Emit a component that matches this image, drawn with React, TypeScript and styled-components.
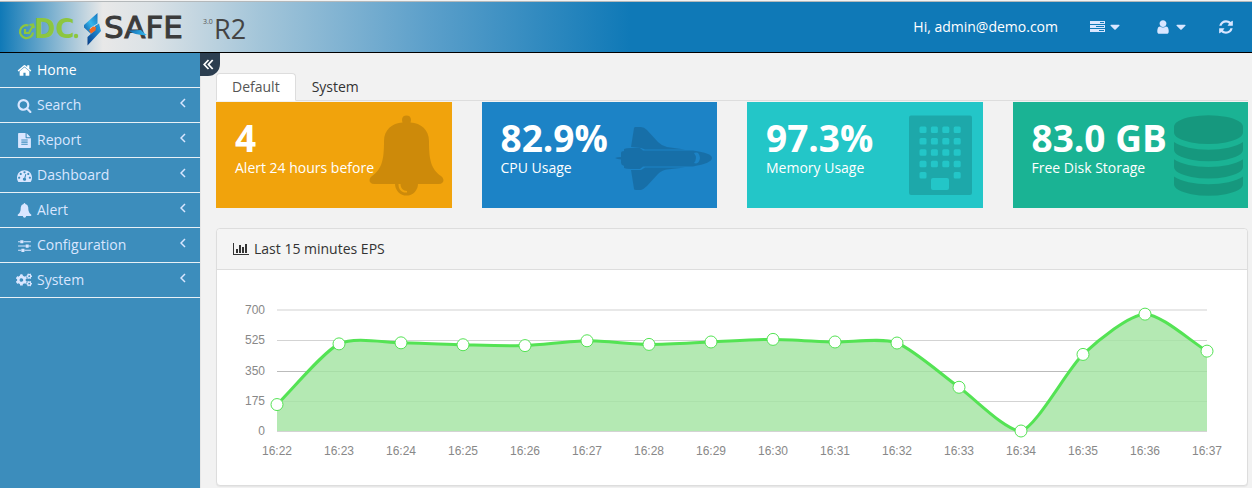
import React, { useLayoutEffect, useRef, useState } from "react";
import styled, { createGlobalStyle, css } from "styled-components";
import { FaCogs } from "react-icons/fa";

const GlobalStyle = createGlobalStyle`
  *, *::before, *::after { box-sizing: border-box; }
  body {
    margin: 0;
    background: #f2f2f2;
    color: #333;
    font: 14px/20px "Open Sans", "Noto Sans", sans-serif;
  }
  button { font: inherit; border: 0; background: none; padding: 0; cursor: pointer; }
  a { color: inherit; text-decoration: none; }
`;

const paths = {
  home: "M1472 992v480q0 26-19 45t-45 19h-384v-384h-256v384h-384q-26 0-45-19t-19-45v-480q0-1 .5-3t.5-3l575-474 575 474q1 2 1 6zm223-69l-62 74q-8 9-21 11h-3q-13 0-21-7l-692-577-692 577q-12 8-24 7-13-2-21-11l-62-74q-8-10-7-23.5t11-21.5l719-599q32-26 76-26t76 26l244 204v-195q0-14 9-23t23-9h192q14 0 23 9t9 23v408l219 182q10 8 11 21.5t-7 23.5z",
  search: "M1216 832q0-185-131.5-316.5t-316.5-131.5-316.5 131.5-131.5 316.5 131.5 316.5 316.5 131.5 316.5-131.5 131.5-316.5zm512 832q0 52-38 90t-90 38q-54 0-90-38l-343-342q-179 124-399 124-143 0-273.5-55.5t-225-150-150-225-55.5-273.5 55.5-273.5 150-225 225-150 273.5-55.5 273.5 55.5 225 150 150 225 55.5 273.5q0 220-124 399l343 343q37 37 37 90z",
  report: "M1596 476q14 14 28 36h-472v-472q22 14 36 28zm-476 164h544v1056q0 40-28 68t-68 28h-1344q-40 0-68-28t-28-68v-1600q0-40 28-68t68-28h800v544q0 40 28 68t68 28zm160 736v-64q0-14-9-23t-23-9h-704q-14 0-23 9t-9 23v64q0 14 9 23t23 9h704q14 0 23-9t9-23zm0-256v-64q0-14-9-23t-23-9h-704q-14 0-23 9t-9 23v64q0 14 9 23t23 9h704q14 0 23-9t9-23zm0-256v-64q0-14-9-23t-23-9h-704q-14 0-23 9t-9 23v64q0 14 9 23t23 9h704q14 0 23-9t9-23z",
  dashboard: "M384 1152q0-53-37.5-90.5t-90.5-37.5-90.5 37.5-37.5 90.5 37.5 90.5 90.5 37.5 90.5-37.5 37.5-90.5zm192-448q0-53-37.5-90.5t-90.5-37.5-90.5 37.5-37.5 90.5 37.5 90.5 90.5 37.5 90.5-37.5 37.5-90.5zm428 481l101-382q6-26-7.5-48.5t-38.5-29.5-48 6.5-30 39.5l-101 382q-60 5-107 43.5t-63 98.5q-20 77 20 146t117 89 146-20 89-117q16-60-6-117t-72-91zm660-33q0-53-37.5-90.5t-90.5-37.5-90.5 37.5-37.5 90.5 37.5 90.5 90.5 37.5 90.5-37.5 37.5-90.5zm-640-640q0-53-37.5-90.5t-90.5-37.5-90.5 37.5-37.5 90.5 37.5 90.5 90.5 37.5 90.5-37.5 37.5-90.5zm448 192q0-53-37.5-90.5t-90.5-37.5-90.5 37.5-37.5 90.5 37.5 90.5 90.5 37.5 90.5-37.5 37.5-90.5zm320 448q0 261-141 483-19 29-54 29h-1402q-35 0-54-29-141-221-141-483 0-182 71-348t191-286 286-191 348-71 348 71 286 191 191 286 71 348z",
  bell: "M896 0q-90 0-104 120-300 60-340 380-10 250-40 420-50 290-332 490v60q0 80 80 80h536q20 200 200 200t200-200h536q80 0 80-80v-60q-282-200-332-490-30-170-40-420-40-320-340-380-14-120-104-120z",
  sliders: "M480 1408v128h-352v-128h352zm352-128q26 0 45 19t19 45v256q0 26-19 45t-45 19h-256q-26 0-45-19t-19-45v-256q0-26 19-45t45-19h256zm160-384v128h-864v-128h864zm-640-512v128h-224v-128h224zm1312 1024v128h-736v-128h736zm-960-1152q26 0 45 19t19 45v256q0 26-19 45t-45 19h-256q-26 0-45-19t-19-45v-256q0-26 19-45t45-19h256zm640 512q26 0 45 19t19 45v256q0 26-19 45t-45 19h-256q-26 0-45-19t-19-45v-256q0-26 19-45t45-19h256zm320 128v128h-224v-128h224zm0-512v128h-864v-128h864z",
  caret: "M1408 704q0 26-19 45l-448 448q-19 19-45 19t-45-19l-448-448q-19-19-19-45t19-45 45-19h896q26 0 45 19t19 45z",
  refresh: "M1639 1056q0 5-1 7-64 268-268 434.5t-478 166.5q-146 0-282.5-55t-243.5-157l-129 129q-19 19-45 19t-45-19-19-45v-448q0-26 19-45t45-19h448q26 0 45 19t19 45-19 45l-137 137q71 66 161 102t187 36q134 0 250-65t186-179q11-17 53-117 8-23 30-23h192q13 0 22.5 9.5t9.5 22.5zm25-800v448q0 26-19 45t-45 19h-448q-26 0-45-19t-19-45 19-45l138-138q-148-137-349-137-134 0-250 65t-186 179q-11 17-53 117-8 23-30 23h-199q-13 0-22.5-9.5t-9.5-22.5v-7q65-268 270-434.5t480-166.5q146 0 284 55.5t245 156.5l130-129q19-19 45-19t45 19 19 45z",
  user: "M1536 1399q0 109-62.5 187t-150.5 78h-854q-88 0-150.5-78t-62.5-187q0-85 8.5-160.5t31.5-152 58.5-131 94-89 134.5-34.5q131 128 313 128t313-128q76 0 134.5 34.5t94 89 58.5 131 31.5 152 8.5 160.5zm-256-887q0 159-112.5 271.5t-271.5 112.5-271.5-112.5-112.5-271.5 112.5-271.5 271.5-112.5 271.5 112.5 112.5 271.5z",
  database: "M896 768q237 0 443-43t325-127v170q0 69-103 128t-280 93.5-385 34.5-385-34.5-280-93.5-103-128v-170q119 84 325 127t443 43zm0 768q237 0 443-43t325-127v170q0 69-103 128t-280 93.5-385 34.5-385-34.5-280-93.5-103-128v-170q119 84 325 127t443 43zm0-384q237 0 443-43t325-127v170q0 69-103 128t-280 93.5-385 34.5-385-34.5-280-93.5-103-128v-170q119 84 325 127t443 43zm0-1152q208 0 385 34.5t280 93.5 103 128v128q0 69-103 128t-280 93.5-385 34.5-385-34.5-280-93.5-103-128v-128q0-69 103-128t280-93.5 385-34.5z",
};

const Glyph = ({ name, size = 14 }: { name: keyof typeof paths; size?: number }) => (
  <svg width={size} height={size} viewBox="0 0 1792 1792" fill="currentColor" aria-hidden="true">
    <path d={paths[name]} />
  </svg>
);

/* ---------- header ---------- */

const Header = styled.header`
  display: flex;
  align-items: center;
  justify-content: space-between;
  height: 53px;
  padding: 2px 18px 0;
  border-bottom: 1px solid #000;
  box-shadow: inset 0 1px 0 #f2f2f2, inset 0 2px 0 #b4b8ba;
  background: linear-gradient(90deg, #0f79b7 0, #e8e8e8 103px, #dbe2e6 150px, #a3c5d9 260px, #5b9fca 430px, #0f79b7 630px);
`;

const Brand = styled.a`
  display: block;
  height: 50px;
  svg { display: block; }
`;

const Tools = styled.nav`
  display: flex;
  align-items: center;
  color: #d9e6ff;
`;

const Greeting = styled.span`
  margin-right: 32px;
  color: #fff;
`;

const ToolButton = styled.button<{ $after?: number }>`
  display: flex;
  align-items: center;
  gap: 2px;
  height: 24px;
  margin-right: ${(p) => p.$after ?? 0}px;
  color: inherit;
`;

function Logo() {
  return (
    <svg width="232" height="50" viewBox="18 2 232 50" role="img" aria-label="eDC SAFE 3.0 R2">
      <defs>
        <linearGradient id="boltTop" x1="1" y1="0" x2="0" y2="1">
          <stop offset="0" stopColor="#1573bd" />
          <stop offset="0.5" stopColor="#35b8ee" />
          <stop offset="1" stopColor="#0a4d9a" />
        </linearGradient>
        <linearGradient id="boltBottom" x1="1" y1="0" x2="0" y2="1">
          <stop offset="0" stopColor="#2aa5e2" />
          <stop offset="0.6" stopColor="#1268b5" />
          <stop offset="1" stopColor="#093a80" />
        </linearGradient>
        <linearGradient id="bar" x1="0" y1="0" x2="1" y2="0">
          <stop offset="0" stopColor="#1268b0" />
          <stop offset="1" stopColor="#35bdf0" />
        </linearGradient>
      </defs>
      <path d="M28.500 25.500A6.500 6.500 0 1 0 33 32.500M25 29V33H29L33 25.500M29.500 25L33 24.500L34 28" fill="none" stroke="#8dc63f" strokeWidth="2.200" />
      <text x="34" y="38" fontFamily="DejaVu Sans" fontWeight="700" fontSize="26" fill="#8dc63f">DC</text>
      <circle cx="76" cy="36" r="2.200" fill="#8dc63f" />
      <path d="M97.500 13V23.500L90 28L91 34L84 27.500V25Z" fill="url(#boltTop)" />
      <path d="M99 23.500L101 31L87.500 45.500V37L94 31L95 26Z" fill="url(#boltBottom)" />
      <path d="M89 30L93 26.500L96 27L95.500 30.500L91 33.500Z" fill="#f26a21" />
      <text x="104" y="38" fontFamily="DejaVu Sans" fontSize="31" fill="#3b3b3b" stroke="#3b3b3b">SAFE</text>
      <path d="M128 30.500L141 30Q144 34 147 35Q137 36 128 30.500Z" fill="url(#bar)" />
      <text x="203" y="24" fontFamily="Open Sans" fontSize="7" fill="#555">3.0</text>
      <text x="214" y="39" fontFamily="Open Sans" fontSize="27" fill="#444">R2</text>
    </svg>
  );
}

/* ---------- sidebar ---------- */

const Body = styled.div`
  display: grid;
  grid-template-columns: 200px minmax(0, 1fr);
  min-height: calc(100vh - 53px);
`;

const Sidebar = styled.nav`
  background: #3c8dbc;
  ul { margin: 0; padding: 0; list-style: none; }
`;

const MenuLink = styled.a<{ $active?: boolean }>`
  display: flex;
  align-items: center;
  gap: 6px;
  height: 35px;
  padding: 0 14px 0 17px;
  border-bottom: 1px solid #e8f1f7;
  color: ${(p) => (p.$active ? "#fff" : "#d9e6ff")};
`;

const IconSlot = styled.span`
  display: flex;
  align-items: center;
  justify-content: center;
  width: 14px;
  svg { flex: none; }
`;

const Label = styled.span`
  flex: 1;
`;

const Chevron = styled.span`
  display: flex;
  padding-bottom: 4px;
`;

type Item = { label: string; icon: React.ReactNode; active?: boolean };

const menu: Item[] = [
  { label: "Home", icon: <Glyph name="home" size={15} />, active: true },
  { label: "Search", icon: <Glyph name="search" size={15} /> },
  { label: "Report", icon: <Glyph name="report" size={15} /> },
  { label: "Dashboard", icon: <Glyph name="dashboard" size={15} /> },
  { label: "Alert", icon: <Glyph name="bell" size={15} /> },
  { label: "Configuration", icon: <Glyph name="sliders" size={15} /> },
  { label: "System", icon: <FaCogs size={16} aria-hidden="true" /> },
];

/* ---------- content ---------- */

const Main = styled.main`
  position: relative;
  padding: 20px 4px 2px 15px;
  border-left: 1px solid #e7e7e7;
`;

const Collapse = styled.button`
  position: absolute;
  top: 0;
  left: -1px;
  display: flex;
  align-items: center;
  width: 20px;
  height: 23px;
  padding-left: 3px;
  border-radius: 0 0 12px 0;
  background: #2c3e50;
  color: #fff;
`;

const Tabs = styled.div`
  display: flex;
  height: 28px;
  border-bottom: 1px solid #ddd;
`;

const Tab = styled.button<{ $active?: boolean }>`
  height: 28px;
  padding: 0 15px;
  border: 1px solid transparent;
  border-radius: 4px 4px 0 0;
  color: #333;
  ${(p) =>
    p.$active &&
    css`
      border-color: #ddd #ddd #fff;
      background: #fff;
      color: #555;
    `}
`;

const Cards = styled.section`
  display: grid;
  grid-template-columns: repeat(4, minmax(0, 1fr));
  gap: 30px;
  margin: 1px 0 20px;
`;

const Card = styled.article<{ $color: string }>`
  position: relative;
  height: 106px;
  padding: 16px 19px;
  background: ${(p) => p.$color};
  color: #fff;
`;

const Value = styled.strong`
  display: block;
  position: relative;
  font-size: 37px;
  font-weight: 700;
  line-height: 40px;
  white-space: nowrap;
`;

const Caption = styled.span`
  display: block;
  position: relative;
  white-space: nowrap;
`;

const Art = styled.svg<{ $right: number }>`
  position: absolute;
  top: 13px;
  right: ${(p) => p.$right}px;
  height: 81px;
  fill: rgba(0, 0, 0, 0.15);
`;

const windows = [0, 1, 2, 3, 4].flatMap((r) =>
  [0, 1, 2, 3].filter((c) => r < 4 || c === 0 || c === 3).map((c) => [11 + c * 11.4, 11.5 + r * 11.4]),
);

const BellArt = () => (
  <Art $right={8} width="75" viewBox="0 0 75 81" aria-hidden="true">
    <path d="M33.500 7.500C32 3 34 .5 37.500 .5S43 3 41.500 7.500C52 8 60 15 60 26C60 45 62 54 72 61C76 64 75 69 70 69H49A11.500 11.500 0 0 1 26 69H5C0 69-1 64 3 61C13 54 15 45 15 26C15 15 23 8 33.500 7.500ZM29.500 69C29.500 75 33 78 38 77.500V76C34 76 31.500 73 31.500 69Z" />
  </Art>
);

const ShuttleArt = () => (
  <Art $right={5} width="97" viewBox="0 0 97 81" aria-hidden="true">
    <path d="M16 32L19 13C19 12 20 12 21 12H26Q29 12 32 15L43 27Q47 31 52 32L70 34.500H30L26 33Z" />
    <path d="M0 43Q2 42 6 42V38Q6 36 9 36V34Q11 33 15 33H25L28 35.500H78Q97 38 97 43T78 51.500H28L25 54H15Q11 54 9 53V51Q6 50 6 48V44.500Q2 44 0 43ZM79 38Q83 43 79 48Q84 50 85 43Q84 36 79 38Z" fillRule="evenodd" />
    <path d="M16 55L19 74Q19 75 21 75H26Q29 74 32 71L43 59Q47 55 52 54.500L70 52.500H30L26 55Z" />
  </Art>
);

const BuildingArt = () => (
  <Art $right={11} width="63" viewBox="0 0 63 81" aria-hidden="true">
    <path
      fillRule="evenodd"
      d={
        "M2 .5H61Q63 .5 63 2.500V78Q63 80 61 80H2Q0 80 0 78V2.500Q0 .5 2 .5ZM24 63Q22 63 22 65V73Q22 75 24 75H38Q40 75 40 73V65Q40 63 38 63Z" +
        windows.map(([x, y]) => `M${x + 1} ${y}h4q1.500 0 1.500 1.500v3.500q0 1.500-1.500 1.500h-4q-1.500 0-1.500-1.500v-3.500q0-1.500 1.500-1.500z`).join("")
      }
    />
  </Art>
);

const DatabaseArt = () => (
  <Art $right={5} width="69" viewBox="128 0 1536 1792" aria-hidden="true">
    <path d={paths.database} />
  </Art>
);

const cards = [
  { color: "#f1a30c", value: "4", caption: "Alert 24 hours before", art: <BellArt /> },
  { color: "#1c83c6", value: "82.9%", caption: "CPU Usage", art: <ShuttleArt /> },
  { color: "#23c6c8", value: "97.3%", caption: "Memory Usage", art: <BuildingArt /> },
  { color: "#1ab394", value: "83.0 GB", caption: "Free Disk Storage", art: <DatabaseArt /> },
];

const Panel = styled.section`
  border: 1px solid #ddd;
  border-radius: 4px;
  background: #fff;
  box-shadow: 0 1px 1px rgba(0, 0, 0, 0.05);
`;

const PanelTitle = styled.h2`
  display: flex;
  align-items: center;
  gap: 5px;
  height: 41px;
  margin: 0;
  padding: 0 16px;
  border-bottom: 1px solid #ddd;
  border-radius: 4px 4px 0 0;
  background: #f4f4f4;
  font-size: 14px;
  font-weight: 400;
`;

const ChartBox = styled.div`
  padding: 15px;
  svg { display: block; width: 100%; }
  text { font: 12px "Liberation Sans", Arial, sans-serif; fill: #888; }
`;

/* ---------- chart ---------- */

const series = [153, 504, 510, 499, 494, 522, 501, 515, 530, 515, 509, 253, 0, 443, 676, 462];
const ticks = [0, 175, 350, 525, 700];
const LEFT = 45;
const RIGHT = 25;
const TOP = 25;
const BOTTOM = 146;

function EpsChart() {
  const ref = useRef<HTMLDivElement>(null);
  const [width, setWidth] = useState(1000);

  useLayoutEffect(() => {
    const el = ref.current!;
    const measure = () => setWidth(el.clientWidth - 30);
    measure();
    const observer = new ResizeObserver(measure);
    observer.observe(el);
    return () => observer.disconnect();
  }, []);

  const yOf = (v: number) => BOTTOM - (v / 700) * (BOTTOM - TOP);
  const step = (width - LEFT - RIGHT) / (series.length - 1);
  const pts = series.map((v, i) => ({ x: LEFT + i * step, y: yOf(v) }));
  const slopes = pts.map((_, i) => {
    const a = pts[Math.max(0, i - 1)];
    const b = pts[Math.min(pts.length - 1, i + 1)];
    return (b.y - a.y) / (b.x - a.x);
  });
  const h = step / 4;
  const line = pts
    .map((p, i) => {
      if (i === 0) return `M${p.x},${p.y}`;
      const q = pts[i - 1];
      const y1 = Math.min(BOTTOM, q.y + h * slopes[i - 1]);
      const y2 = Math.min(BOTTOM, p.y - h * slopes[i]);
      return `C${q.x + h},${y1},${p.x - h},${y2},${p.x},${p.y}`;
    })
    .join("");

  return (
    <ChartBox ref={ref}>
      <svg height="185" role="img" aria-label="Events per second, last 15 minutes">
        {ticks.map((t) => (
          <g key={t}>
            <line
              x1={LEFT}
              x2={width - RIGHT}
              y1={Math.round(yOf(t)) + (t === 700 ? 0 : 0.5)}
              y2={Math.round(yOf(t)) + (t === 700 ? 0 : 0.5)}
              stroke={t === 700 ? "#e8e8e8" : t === 350 ? "#bbb" : "#d3d3d3"}
              strokeWidth={t === 700 ? 2 : 1}
            />
            <text x={LEFT - 12} y={yOf(t) + 4} textAnchor="end">{t}</text>
          </g>
        ))}
        <path d={`${line}V${BOTTOM}H${LEFT}Z`} fill="#a4e4a2" fillOpacity="0.82" />
        <path d={line} fill="none" stroke="#54e354" strokeWidth="3" />
        {pts.map((p, i) => (
          <g key={i}>
            <circle cx={p.x} cy={p.y} r="6" fill="#fff" stroke="#54e354" />
            <text x={p.x} y="170" textAnchor="middle">{`16:${22 + i}`}</text>
          </g>
        ))}
      </svg>
    </ChartBox>
  );
}

/* ---------- page ---------- */

export default function App() {
  return (
    <>
      <GlobalStyle />
      <Header>
        <Brand href="#" aria-label="Home page"><Logo /></Brand>
        <Tools>
          <Greeting>Hi, admin@demo.com</Greeting>
          <ToolButton aria-label="Servers" $after={32}>
            <svg width="15" height="12" viewBox="0 0 15 12" fill="currentColor" aria-hidden="true">
              <path fillRule="evenodd" d="M0 0h15v3H0zM10 1h4v1h-4zM0 4h15v3H0zM6 5h8v1h-8zM0 8h15v3H0zM9 9h5v1h-5z" />
            </svg>
            <Glyph name="caret" size={16} />
          </ToolButton>
          <ToolButton aria-label="Account" $after={29}>
            <Glyph name="user" size={16} />
            <Glyph name="caret" size={16} />
          </ToolButton>
          <ToolButton aria-label="Refresh"><Glyph name="refresh" size={16} /></ToolButton>
        </Tools>
      </Header>
      <Body>
        <Sidebar aria-label="Main menu">
          <ul>
            {menu.map((m) => (
              <li key={m.label}>
                <MenuLink href="#" $active={m.active}>
                  <IconSlot>{m.icon}</IconSlot>
                  <Label>{m.label}</Label>
                  {!m.active && (
                    <Chevron>
                      <svg width="6" height="10" viewBox="0 0 6 10" fill="none" stroke="currentColor" strokeWidth="1.500" aria-hidden="true">
                        <path d="M5 1L1 5L5 9" />
                      </svg>
                    </Chevron>
                  )}
                </MenuLink>
              </li>
            ))}
          </ul>
        </Sidebar>
        <Main>
          <Collapse aria-label="Collapse menu">
            <svg width="11" height="11" viewBox="0 0 11 11" fill="none" stroke="currentColor" strokeWidth="1.800" aria-hidden="true">
              <path d="M5.500 1L1.200 5.500L5.500 10M9.700 1L5.500 5.500L9.700 10" />
            </svg>
          </Collapse>
          <Tabs role="tablist">
            <Tab role="tab" aria-selected="true" $active>Default</Tab>
            <Tab role="tab" aria-selected="false">System</Tab>
          </Tabs>
          <Cards>
            {cards.map((c) => (
              <Card key={c.caption} $color={c.color}>
                {c.art}
                <Value>{c.value}</Value>
                <Caption>{c.caption}</Caption>
              </Card>
            ))}
          </Cards>
          <Panel>
            <PanelTitle>
              <svg width="16" height="14" viewBox="0 0 2048 1792" fill="currentColor" aria-hidden="true">
                <path d="M640 896v512h-256v-512h256zm384-512v1024h-256v-1024h256zm1024 1152v128h-2048v-1536h128v1408h1920zm-640-896v768h-256v-768h256zm384-384v1152h-256v-1152h256z" />
              </svg>
              Last 15 minutes EPS
            </PanelTitle>
            <EpsChart />
          </Panel>
        </Main>
      </Body>
    </>
  );
}
